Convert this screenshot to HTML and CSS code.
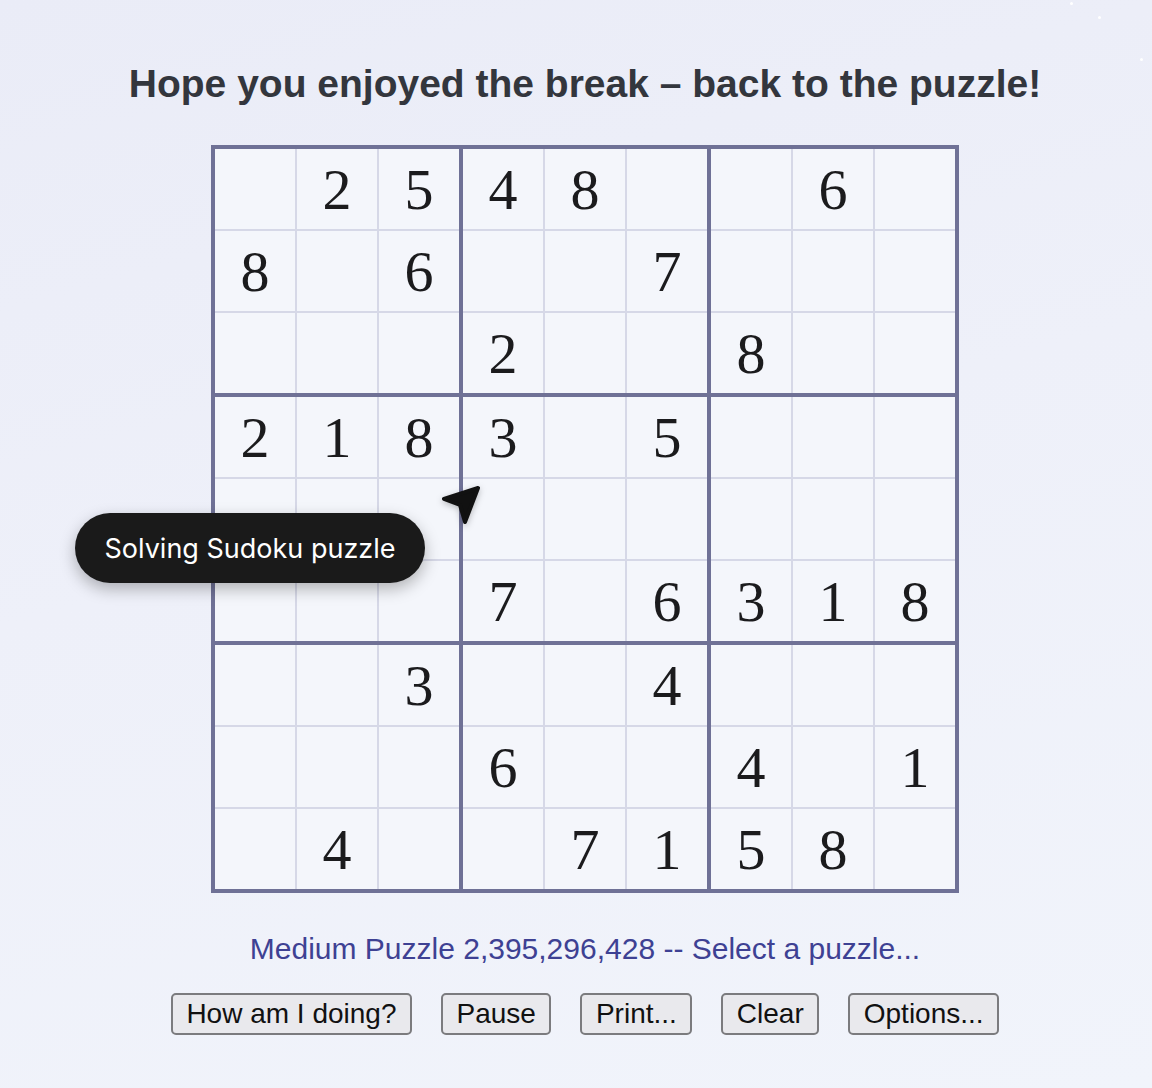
FILE: index.html
```html
<!DOCTYPE html>
<html>
<head>
<meta charset="utf-8">
<link rel="stylesheet" href="styles.css">
</head>
<body>
<main class="page">
  <h1 class="title">Hope you enjoyed the break – back to the puzzle!</h1>
  <div class="board">
    <div class="box">
      <div class="cell"></div><div class="cell">2</div><div class="cell">5</div>
      <div class="cell">8</div><div class="cell"></div><div class="cell">6</div>
      <div class="cell"></div><div class="cell"></div><div class="cell"></div>
    </div>
    <div class="box">
      <div class="cell">4</div><div class="cell">8</div><div class="cell"></div>
      <div class="cell"></div><div class="cell"></div><div class="cell">7</div>
      <div class="cell">2</div><div class="cell"></div><div class="cell"></div>
    </div>
    <div class="box">
      <div class="cell"></div><div class="cell">6</div><div class="cell"></div>
      <div class="cell"></div><div class="cell"></div><div class="cell"></div>
      <div class="cell">8</div><div class="cell"></div><div class="cell"></div>
    </div>
    <div class="box">
      <div class="cell">2</div><div class="cell">1</div><div class="cell">8</div>
      <div class="cell"></div><div class="cell"></div><div class="cell"></div>
      <div class="cell"></div><div class="cell"></div><div class="cell"></div>
    </div>
    <div class="box">
      <div class="cell">3</div><div class="cell"></div><div class="cell">5</div>
      <div class="cell"></div><div class="cell"></div><div class="cell"></div>
      <div class="cell">7</div><div class="cell"></div><div class="cell">6</div>
    </div>
    <div class="box">
      <div class="cell"></div><div class="cell"></div><div class="cell"></div>
      <div class="cell"></div><div class="cell"></div><div class="cell"></div>
      <div class="cell">3</div><div class="cell">1</div><div class="cell">8</div>
    </div>
    <div class="box">
      <div class="cell"></div><div class="cell"></div><div class="cell">3</div>
      <div class="cell"></div><div class="cell"></div><div class="cell"></div>
      <div class="cell"></div><div class="cell">4</div><div class="cell"></div>
    </div>
    <div class="box">
      <div class="cell"></div><div class="cell"></div><div class="cell">4</div>
      <div class="cell">6</div><div class="cell"></div><div class="cell"></div>
      <div class="cell"></div><div class="cell">7</div><div class="cell">1</div>
    </div>
    <div class="box">
      <div class="cell"></div><div class="cell"></div><div class="cell"></div>
      <div class="cell">4</div><div class="cell"></div><div class="cell">1</div>
      <div class="cell">5</div><div class="cell">8</div><div class="cell"></div>
    </div>
  </div>
  <p class="info">Medium Puzzle 2,395,296,428 -- <a class="select" href="#">Select a puzzle...</a></p>
  <div class="actions">
    <button class="btn">How am I doing?</button>
    <button class="btn">Pause</button>
    <button class="btn">Print...</button>
    <button class="btn">Clear</button>
    <button class="btn">Options...</button>
  </div>
</main>
<div class="tooltip">Solving Sudoku puzzle</div>
<svg class="cursor" width="44" height="44" viewBox="0 0 44 44">
  <path d="M38 4 L4 15 L20 21 L25 38 Z" fill="#111" stroke="#111" stroke-width="4" stroke-linejoin="round"/>
</svg>
<span class="spark s1"></span>
<span class="spark s2"></span>
<span class="spark s3"></span>
</body>
</html>
```
FILE: styles.css
```css
html, body {
  margin: 0;
  padding: 0;
}
body {
  width: 1152px;
  min-height: 1088px;
  background: linear-gradient(165deg, #eaecf7 0%, #eef0f9 45%, #f1f4fb 100%);
  font-family: "Liberation Sans", Arial, sans-serif;
  position: relative;
  overflow: hidden;
}
.page {
  display: flex;
  flex-direction: column;
  align-items: center;
  padding-left: 18px;
}
.title {
  margin: 62px 0 0;
  font-size: 39px;
  line-height: 44px;
  font-weight: bold;
  color: #33363d;
}
.board {
  margin-top: 39px;
  display: grid;
  grid-template-columns: repeat(3, 244px);
  grid-template-rows: repeat(3, 244px);
  gap: 4px;
  padding: 4px;
  background: #6f7196;
}
.box {
  display: grid;
  grid-template-columns: repeat(3, 80px);
  grid-template-rows: repeat(3, 80px);
  gap: 2px;
  background: #d6d8e7;
}
.cell {
  background: #f4f6fb;
  display: flex;
  align-items: center;
  justify-content: center;
  font-family: "Liberation Serif", "Times New Roman", serif;
  font-size: 58px;
  line-height: 1;
  color: #1b1b1d;
  padding-top: 1px;
  box-sizing: border-box;
}
.info {
  margin: 39px 0 0;
  font-size: 30px;
  line-height: 34px;
  color: #3e4193;
}
.select {
  color: #3e4193;
  text-decoration: none;
}
.actions {
  margin-top: 27px;
  display: flex;
  gap: 29px;
}
.btn {
  font-family: "Liberation Sans", Arial, sans-serif;
  font-size: 28px;
  line-height: 32px;
  padding: 3px 13.5px;
  border: 2px solid #7b7b7e;
  border-radius: 5px;
  background: #e9e9ed;
  color: #111;
}
.tooltip {
  position: absolute;
  left: 75px;
  top: 513px;
  width: 350px;
  height: 70px;
  border-radius: 35px;
  background: #1a1a1a;
  color: #fff;
  font-family: Inter, "Noto Sans", sans-serif;
  font-size: 27px;
  display: flex;
  align-items: center;
  justify-content: center;
  box-shadow: 0 6px 16px rgba(0, 0, 0, 0.28);
}
.cursor {
  position: absolute;
  left: 440px;
  top: 484px;
  filter: drop-shadow(0 2px 3px rgba(0, 0, 0, 0.25));
}
.spark {
  position: absolute;
  width: 3px;
  height: 3px;
  border-radius: 50%;
  background: #fff;
}
.s1 { left: 1070px; top: 2px; }
.s2 { left: 1098px; top: 16px; }
.s3 { left: 1140px; top: 58px; }
```
